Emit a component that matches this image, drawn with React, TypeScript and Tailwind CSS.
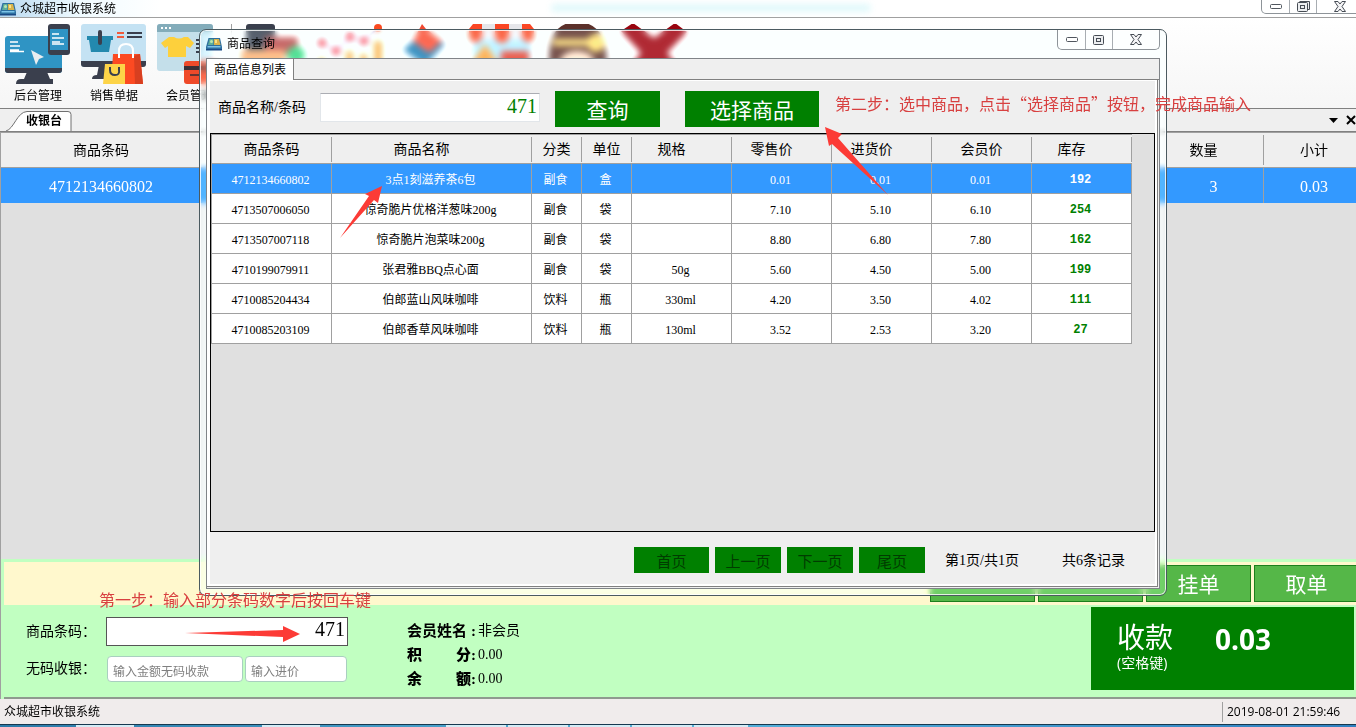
import type { ReactNode } from "react";

const UI = "font-['Open_Sans','Noto_Sans_CJK_SC',sans-serif]";
const SONG = "font-['Liberation_Serif','Noto_Sans_CJK_SC',sans-serif]";
const CJK = "font-['Noto_Sans_CJK_SC',sans-serif]";

type Column = { title: string; width: string; sortable?: boolean };

const columns: Column[] = [
  { title: "商品条码", width: "w-[120px]" },
  { title: "商品名称", width: "w-[200px]", sortable: true },
  { title: "分类", width: "w-[50px]" },
  { title: "单位", width: "w-[50px]" },
  { title: "规格", width: "w-[100px]", sortable: true },
  { title: "零售价", width: "w-[100px]", sortable: true },
  { title: "进货价", width: "w-[100px]", sortable: true },
  { title: "会员价", width: "w-[100px]" },
  { title: "库存", width: "w-[100px]", sortable: true },
];

const products = [
  ["4712134660802", "3点1刻滋养茶6包", "副食", "盒", "", "0.01", "0.01", "0.01", "192"],
  ["4713507006050", "惊奇脆片优格洋葱味200g", "副食", "袋", "", "7.10", "5.10", "6.10", "254"],
  ["4713507007118", "惊奇脆片泡菜味200g", "副食", "袋", "", "8.80", "6.80", "7.80", "162"],
  ["4710199079911", "张君雅BBQ点心面", "副食", "袋", "50g", "5.60", "4.50", "5.00", "199"],
  ["4710085204434", "伯郎蓝山风味咖啡", "饮料", "瓶", "330ml", "4.20", "3.50", "4.02", "111"],
  ["4710085203109", "伯郎香草风味咖啡", "饮料", "瓶", "130ml", "3.52", "2.53", "3.20", "27"],
];

function AppIcon() {
  return (
    <svg viewBox="0 0 16 14" className="h-[14px] w-4 shrink-0" aria-hidden="true">
      <path d="M2.500 1h11.500L16 10v3H0v-3z" fill="#2d6f9f" />
      <path d="M3.500 2h4v6H2z" fill="#5fae9a" />
      <path d="M8 2h5l1.500 6H8z" fill="#d9b34a" />
      <path d="M9 3h2v3H9z" fill="#f8e28a" />
      <circle cx="5.500" cy="4.500" r="1.500" fill="#b9e6b0" />
      <path d="M1.500 9h13v1.500H1.500z" fill="#7cc4e8" />
      <path d="M0 12h16v1.500H0z" fill="#1a4a86" />
    </svg>
  );
}

function BackOfficeIcon() {
  return (
    <svg viewBox="0 0 66 60" className="h-[60px] w-[66px]" aria-hidden="true">
      <path d="M22 48h20l3 7h3v5H11q0-5 5-5h3z" fill="#3a3f4d" />
      <rect y="12" width="57" height="37" rx="3" fill="#2f94c4" />
      <path d="M0 44h57v2a3 3 0 0 1-3 3H3a3 3 0 0 1-3-3z" fill="#3a3f4d" />
      <path d="M5 18h8M5 22h10M5 26h9M5 27.500h14" stroke="#fff" strokeWidth="1.500" />
      <path d="M26 26l13 7-5 2-3 6z" fill="#e9edf0" />
      <rect x="43" width="22" height="31" rx="3" fill="#3a3f4d" />
      <rect x="45" y="5" width="18" height="21" fill="#2f94c4" />
      <path d="M47 10h7M47 14h12M47 18h8M47 20h12" stroke="#fff" strokeWidth="1.500" />
    </svg>
  );
}

function SalesIcon() {
  return (
    <svg viewBox="0 0 66 60" className="h-[60px] w-[66px]" aria-hidden="true">
      <path d="M18 41h14v14h4v0H11q0-4 5-4z" fill="#3a3f4d" />
      <rect width="65" height="43" rx="3" fill="#c4e2f3" />
      <path d="M0 37h65v3a3 3 0 0 1-3 3H3a3 3 0 0 1-3-3z" fill="#3a3f4d" />
      <path d="M6 12h26v4h-2l-2 12H10L8 16H6z" fill="#2389ae" />
      <rect x="17" y="6" width="4" height="15" rx="2" fill="#3a3f4d" />
      <path d="M36 9h7M36 13h7" stroke="#f05a3c" strokeWidth="2" />
      <path d="M46 9h15M46 13h15" stroke="#3a3f4d" strokeWidth="2" />
      <path d="M32 30h27l3 30H30z" fill="#fc4a22" />
      <path d="M53 32l6-2 3 30h-8z" fill="#d83f20" />
      <path d="M38 34V27q0-7 7-7t7 7v7" fill="none" stroke="#fff" strokeWidth="2" />
      <path d="M24 40h20v20H22z" fill="#fdd448" />
      <path d="M29 43v3q0 5 5 5t4-5v-3" fill="none" stroke="#3a3f4d" strokeWidth="2" />
    </svg>
  );
}

function MemberIcon() {
  return (
    <svg viewBox="0 0 66 60" className="h-[60px] w-[66px]" aria-hidden="true">
      <rect width="56" height="47" rx="3" fill="#c4dfea" />
      <path d="M0 8V3a3 3 0 0 1 3-3h50a3 3 0 0 1 3 3v5z" fill="#83acba" />
      <path d="M4 4h2M8 4h2M12 4h2" stroke="#fff" strokeWidth="2" />
      <path d="M12 13h5q5 3 10 0h4l6 6-4 5-4-2v11H11V22l-3 2-4-5z" fill="#fdd03c" />
      <path d="M39 16h4M39 20h4M39 24h4M39 28h4" stroke="#3a3f4d" strokeWidth="2" />
      <rect x="27" y="37" width="38" height="23" rx="3" fill="#ef4a2a" />
      <path d="M27 42h38v4H27z" fill="#3a2f36" />
      <path d="M33 51h10" stroke="#3a2f36" strokeWidth="1.500" />
    </svg>
  );
}

function StockIcon() {
  return (
    <svg viewBox="0 0 66 60" className="h-[60px] w-[66px]" aria-hidden="true">
      <rect x="5" width="29" height="56" rx="3" fill="#3a3f4d" />
      <rect x="24" y="13" width="33" height="18" rx="3" fill="#b04848" />
      <rect y="26" width="44" height="26" fill="#eda56c" />
      <circle cx="55" cy="31" r="9" fill="#35c878" />
    </svg>
  );
}

function ReportIcon() {
  return (
    <svg viewBox="0 0 66 60" className="h-[60px] w-[66px]" aria-hidden="true">
      <path d="M5 19l14 8 14-14 14 4L61 4" fill="none" stroke="#9db8e8" strokeWidth="2" />
      <g fill="#ee3344">
        <circle cx="5" cy="19" r="4" />
        <circle cx="19" cy="27" r="4" />
        <circle cx="33" cy="13" r="4" />
        <circle cx="47" cy="17" r="4" />
        <circle cx="61" cy="4" r="4" fill="#fa4a20" />
      </g>
      <path d="M1 34h7v26H1zM29 27h7v33h-7zM43 30h7v30h-7zM57 17h8v43h-8z" fill="#f5a040" />
    </svg>
  );
}

function TagIcon() {
  return (
    <svg viewBox="0 0 66 60" className="h-[60px] w-[66px]" aria-hidden="true">
      <path d="M10 26L32 6l20 14-20 22z" fill="#1e76a8" />
      <path d="M29 0l4 5 16 12-13 12-16-12z" fill="#f04830" />
    </svg>
  );
}

function ShopIcon() {
  return (
    <svg viewBox="0 0 66 60" className="h-[60px] w-[66px]" aria-hidden="true">
      <rect x="4" y="12" width="58" height="40" fill="#a9e0f4" />
      <path d="M4 0h9v12a6 6 0 0 1-13 0V5zM26 0h14v12a7 7 0 0 1-14 0zM53 0h8l4 5v7a6 6 0 0 1-12 0z" fill="#fa4624" />
      <path d="M13 0h13v10a6 6 0 0 1-13 0zM40 0h13v10a6 6 0 0 1-13 0z" fill="#e6e6ea" />
      <path d="M16 20l14 20H2z" fill="#f09838" />
      <path d="M32 27h28v14H32z" fill="#d83c2c" />
    </svg>
  );
}

function CashierIcon() {
  return (
    <svg viewBox="0 0 66 60" className="h-[60px] w-[66px]" aria-hidden="true">
      <path d="M4 40Q2 -2 32 -2T62 40z" fill="#5b302a" />
      <path d="M8 15h50v7H8z" fill="#e9c768" />
      <circle cx="51" cy="19" r="9" fill="#f5d56a" />
      <ellipse cx="32" cy="38" rx="17" ry="11" fill="#fbdcc4" />
    </svg>
  );
}

function ExitIcon() {
  return (
    <svg viewBox="0 0 66 60" className="h-[60px] w-[66px]" aria-hidden="true">
      <path d="M0 7L12-1 33 14 54-1 66 8 46 29 64 50 52 59 33 41 14 59 2 50 20 29z" fill="#98040f" />
    </svg>
  );
}

function WindowButtons({ stacked }: { stacked?: boolean }) {
  const cell = "flex items-center justify-center";
  return (
    <div className="flex rounded-b-[5px] border border-t-0 border-[#8e9499] bg-white/60">
      <button aria-label="最小化" className={`${cell} w-7 border-r border-[#a8adb2]`}>
        <svg width="12" height="5" aria-hidden="true">
          <rect x=".5" y=".5" width="11" height="4" rx="1" fill="#fff" stroke="#50565e" />
        </svg>
      </button>
      <button aria-label="最大化" className={`${cell} w-[27px] border-r border-[#a8adb2]`}>
        <svg width="14" height="12" fill="#eceef0" stroke="#464c54" aria-hidden="true">
          {stacked && <path d="M3.500.5h10v8h-3" />}
          <rect x="1.500" y="1.500" width="10" height="9" rx="1" />
          <rect x="4.500" y="4.500" width="4" height="3" />
        </svg>
      </button>
      <button aria-label="关闭" className={`${cell} w-[46px]`}>
        <svg width="12" height="11" aria-hidden="true">
          <path d="M.5.5h3.500l2 2.500 2-2.500h3.500L8 5.500l3.500 5H8L6 8l-2 2.500H.5L4 5.500z" fill="#f4f4f6" stroke="#464c54" />
        </svg>
      </button>
    </div>
  );
}

function Tool({ label, hint, children }: { label?: string; hint?: string; children: ReactNode }) {
  return (
    <button aria-label={label ?? hint} className="flex w-[76px] shrink-0 flex-col items-center text-xs leading-6">
      {children}
      {label}
    </button>
  );
}

function Header() {
  return (
    <header className={UI}>
      <div className="flex h-[17px] items-start justify-between bg-white">
        <div className="flex w-40 items-center gap-1 bg-gradient-to-r from-[#b8d8f0] via-[#f0fbff] to-white text-xs leading-[17px]">
          <AppIcon />
          众城超市收银系统
        </div>
        <div className="mt-1 h-2 w-80 rounded-full bg-[#d4f6fa]/70 blur-[3px]" />
        <div className="-mr-2 flex h-[14px]">
          <WindowButtons stacked />
        </div>
      </div>
      <nav className="flex h-[91px] items-start overflow-hidden border-t border-[#a0a0a0] bg-gradient-to-b from-white to-[#f6f6f6] pt-[6px]">
        <Tool label="后台管理"><BackOfficeIcon /></Tool>
        <Tool label="销售单据"><SalesIcon /></Tool>
        <Tool label="会员管理"><MemberIcon /></Tool>
        <div className="mr-1 ml-[3px] h-20 w-px bg-[#a0a0a0]" />
        <Tool hint="库存"><StockIcon /></Tool>
        <Tool hint="报表"><ReportIcon /></Tool>
        <Tool hint="促销"><TagIcon /></Tool>
        <Tool hint="门店"><ShopIcon /></Tool>
        <Tool hint="收银员"><CashierIcon /></Tool>
        <Tool hint="退出"><ExitIcon /></Tool>
      </nav>
      <div className="flex h-6 items-end justify-between border-t border-b border-[#808080] bg-[#efefef]">
        <div className="relative flex h-5 w-[72px] items-center justify-end pr-[10px] text-xs font-bold">
          <svg viewBox="0 0 72 20" className="absolute inset-0 h-5 w-[72px]" aria-hidden="true">
            <path d="M6 20C14 18 17 1 27 .5H68q3 0 3 3V20" fill="#fff" stroke="#707070" />
          </svg>
          <span className="relative">收银台</span>
        </div>
        <div className="flex h-full items-center gap-2">
          <svg width="9" height="5" aria-hidden="true"><path d="M0 0h9L4.500 5z" /></svg>
          <svg width="10" height="10" aria-hidden="true">
            <path d="M1 1l8 8M9 1L1 9" stroke="#000" strokeWidth="2" />
          </svg>
        </div>
      </div>
    </header>
  );
}

function Cart() {
  return (
    <div className="flex-1 border-t border-l border-[#a0a0a0] bg-[#e0e0e0]">
      <table className={`w-full table-fixed border-separate border-spacing-0 text-center ${SONG}`}>
        <colgroup>
          <col className="w-[200px]" />
          <col />
          <col className="w-[100px]" />
          <col className="w-[92px]" />
        </colgroup>
        <thead>
          <tr className="h-[35px] bg-[#efefef] text-sm">
            <th className="border-b border-[#a0a0a0] p-0 pt-[2px] font-normal">商品条码</th>
            <td className="border-b border-[#a0a0a0]" />
            <th className="border-b border-[#a0a0a0] p-0 font-normal">
              <div className="flex h-[30px] items-center justify-center border-r border-[#a0a0a0] pt-[2px] pr-5">数量</div>
            </th>
            <th className="border-b border-[#a0a0a0] p-0 pt-[2px] pl-2 font-normal">小计</th>
          </tr>
        </thead>
        <tbody>
          <tr className="h-[35px] bg-[#3399ff] text-base text-white">
            <td className="p-0 pt-[2px]">4712134660802</td>
            <td />
            <td className="border-r border-[#a0a0a0] p-0 pt-[2px]">3</td>
            <td className="p-0 pt-[2px] pl-2">0.03</td>
          </tr>
        </tbody>
      </table>
    </div>
  );
}

const orderButton =
  "h-[37px] w-[105px] shrink-0 border border-[#1c7f1c] bg-[#55b748] text-[21px] leading-none text-white";

function Checkout() {
  return (
    <section className="border-l border-[#a0a0a0] bg-[#c1ffc1] pt-[3px] pl-[3px]">
      <div className="flex h-[43px] justify-end gap-[3px] overflow-hidden bg-[#fff8cd] pt-[3px]">
        <button aria-label="删除" className={orderButton} />
        <button aria-label="清空" className={orderButton} />
        <button className={`${orderButton} ${CJK}`}>挂单</button>
        <button className={`${orderButton} -mr-[3px] ${CJK}`}>取单</button>
      </div>
      <div className="flex items-start border-b-2 border-[#8f9a8f] pb-[6px]">
        <form className={`flex w-[403px] flex-col gap-[10px] pt-3 pl-[22px] text-sm ${SONG}`}>
          <div className="flex items-center">
            <label htmlFor="barcode" className="w-20">商品条码：</label>
            <input
              id="barcode"
              defaultValue="471"
              className="h-[29px] w-[242px] border border-[#555] bg-white px-[2px] pb-1 text-right text-xl leading-none"
            />
          </div>
          <div className="flex items-center gap-[2px]">
            <label htmlFor="amount" className="w-[79px]">无码收银：</label>
            <input
              id="amount"
              placeholder="输入金额无码收款"
              className={`h-[26px] w-[136px] rounded-sm border border-[#a9cfc0] bg-white px-[5px] pt-[2px] text-xs placeholder:text-[#808080] ${CJK}`}
            />
            <input
              aria-label="输入进价"
              placeholder="输入进价"
              className={`h-[26px] w-[102px] rounded-sm border border-[#a9cfc0] bg-white px-[5px] pt-[2px] text-xs placeholder:text-[#808080] ${CJK}`}
            />
          </div>
        </form>
        <dl className={`grid grid-cols-[71px_auto] pt-[14px] text-sm leading-6 ${SONG}`}>
          <dt className="flex text-[15px] font-bold"><span className="w-16">会员姓名</span>:</dt>
          <dd>非会员</dd>
          <dt className="flex text-[15px] font-bold"><span className="flex w-16 justify-between"><b>积</b><b>分</b></span>:</dt>
          <dd>0.00</dd>
          <dt className="flex text-[15px] font-bold"><span className="flex w-16 justify-between"><b>余</b><b>额</b></span>:</dt>
          <dd>0.00</dd>
        </dl>
        <button className={`mt-[2px] mr-[2px] ml-auto flex h-[83px] w-[263px] gap-[42px] bg-[#008000] pt-3 pl-[26px] text-left text-white ${UI}`}>
          <span className="flex flex-col">
            <span className="text-[28px] leading-9">收款</span>
            <span className="text-sm leading-4">(空格键)</span>
          </span>
          <span className="text-[28px] leading-10 font-bold">0.03</span>
        </button>
      </div>
    </section>
  );
}

function Footer() {
  return (
    <footer className={UI}>
      <div className="flex h-[25px] items-center justify-between bg-[#f0ecec] pl-1 text-xs">
        <span>众城超市收银系统</span>
        <time className="w-[134px] border-l border-[#a0a0a0] pl-1 leading-5">2019-08-01 21:59:46</time>
      </div>
      <div className="flex h-[3px] gap-[2px] border-t border-[#16384f] bg-gradient-to-r from-[#2a7aa8] via-[#58b4dc] to-[#2f80c0] pl-[76px]">
        <div className="w-[58px] bg-[#d4ecf6]" />
        <div className="ml-[126px] w-[58px] bg-[#d4ecf6]" />
        <div className="ml-[124px] w-[60px] bg-[#d4ecf6]" />
        <div className="w-[60px] bg-[#d4ecf6]" />
        <div className="w-[60px] bg-[#d4ecf6]" />
        <div className="w-[60px] bg-[#d4ecf6]" />
        <div className="w-[54px] bg-[#d4ecf6]" />
      </div>
    </footer>
  );
}

function ProductTable() {
  return (
    <table className={`w-[921px] table-fixed border-separate border-spacing-0 border-t border-l border-[#a0a0a0] bg-white text-center text-xs ${SONG}`}>
      <colgroup>
        {columns.map((c) => (
          <col key={c.title} className={c.width} />
        ))}
      </colgroup>
      <thead>
        <tr className="h-[29px] bg-[#efefef] text-sm">
          {columns.map((c) => (
            <th key={c.title} className="border-b border-[#a0a0a0] p-0 font-normal">
              <div className={`flex h-[25px] items-center justify-center border-r border-[#a0a0a0] pt-[2px] ${c.sortable ? "pr-5" : ""}`}>
                {c.title}
              </div>
            </th>
          ))}
        </tr>
      </thead>
      <tbody>
        {products.map((row, r) => (
          <tr key={row[0]} className={`h-[30px] ${r === 0 ? "bg-[#3399ff] text-white" : ""}`}>
            {row.map((value, i) => (
              <td
                key={i}
                className={`border-r border-b border-[#a0a0a0] p-0 pt-[2px] pr-[2px] ${
                  i === 8 ? "font-['Liberation_Mono',monospace] font-bold" : ""
                } ${i === 8 && r > 0 ? "text-[#008000]" : ""}`}
              >
                {value}
              </td>
            ))}
          </tr>
        ))}
      </tbody>
    </table>
  );
}

const pageButton = "h-[26px] shrink-0 bg-[#008000] text-[15px] leading-none text-[#003c00]";

function ProductDialog() {
  return (
    <div
      role="dialog"
      aria-label="商品查询"
      className="absolute top-[29px] right-[189px] bottom-[131px] left-[199px] flex flex-col rounded-[7px] border border-[#4b5a60] bg-[#e4ffff]/15 px-[6px] pb-[6px] shadow-[inset_0_0_0_1px_rgba(255,255,255,0.8)] backdrop-blur-[3px] backdrop-brightness-110"
    >
      <div className={`flex h-7 items-start justify-between text-xs ${UI}`}>
        <div className="flex h-7 items-center gap-[5px]">
          <AppIcon />
          商品查询
        </div>
        <div className="flex h-5">
          <WindowButtons />
        </div>
      </div>
      <div className="flex flex-1 flex-col border border-[#808488] bg-[#efefef]">
        <div className="flex h-[21px]">
          <div className={`w-[87px] border-r border-[#808080] bg-white text-center text-xs leading-5 ${CJK}`}>商品信息列表</div>
          <div className="flex-1 border-b border-[#808080]" />
        </div>
        <div className="mr-px mb-px flex flex-1 flex-col border-r border-b border-[#808080] bg-white pt-px pr-[2px] pb-[2px] pl-[3px]">
          <div className="flex flex-1 flex-col bg-[#efefef]">
            <form className="flex h-[52px] items-start pt-[10px] pl-2">
              <label htmlFor="keyword" className={`w-[102px] text-sm leading-[34px] ${SONG}`}>商品名称/条码</label>
              <input
                id="keyword"
                defaultValue="471"
                className={`mt-[2px] h-[29px] w-[220px] border border-[#e2e6ea] border-t-[#abadb3] bg-white px-[2px] pb-[2px] text-right text-xl leading-none text-[#008000] ${SONG}`}
              />
              <button type="button" className={`ml-[15px] h-9 w-[105px] bg-[#008000] text-[21px] leading-none text-white ${CJK}`}>查询</button>
              <button type="button" className={`ml-[25px] h-9 w-[134px] bg-[#008000] text-[21px] leading-none text-white ${CJK}`}>选择商品</button>
            </form>
            <div className="flex-1 border border-black bg-[#e0e0e0]">
              <ProductTable />
            </div>
            <div className={`flex h-[52px] items-center justify-end gap-[6px] pr-[30px] pt-1 text-sm ${SONG}`}>
              <button className={`w-[75px] ${pageButton} ${CJK}`}>首页</button>
              <button className={`w-[66px] ${pageButton} ${CJK}`}>上一页</button>
              <button className={`w-[66px] ${pageButton} ${CJK}`}>下一页</button>
              <button className={`w-[66px] ${pageButton} ${CJK}`}>尾页</button>
              <span className="w-[125px] shrink-0 pt-[2px] pl-[14px]">第1页/共1页</span>
              <span className="pt-[2px] whitespace-nowrap">共6条记录</span>
            </div>
          </div>
        </div>
      </div>
    </div>
  );
}

function Guide() {
  return (
    <div className={`pointer-events-none absolute inset-0 text-base leading-6 whitespace-nowrap text-[#d84040] ${CJK}`}>
      <p className="absolute top-[91px] left-[835px]">第二步：选中商品，点击“选择商品”按钮，完成商品输入</p>
      <p className="absolute top-[587px] left-[99px]">第一步：输入部分条码数字后按回车键</p>
      <svg className="absolute inset-0 h-full w-full" fill="#fc3b36" aria-hidden="true">
        <path d="M825 127l17 7-4 4 50 57-56-51-3 2z" />
        <path d="M382 186l-4 17-4-3-34 38 29-42-4-2z" />
        <path d="M185 633l98-3v-4l17 8-17 8v-5z" />
      </svg>
    </div>
  );
}

export default function App() {
  return (
    <div className="relative flex min-h-screen flex-col overflow-hidden bg-[#efefef] text-black" lang="zh-CN">
      <Header />
      <Cart />
      <Checkout />
      <Footer />
      <ProductDialog />
      <Guide />
    </div>
  );
}
